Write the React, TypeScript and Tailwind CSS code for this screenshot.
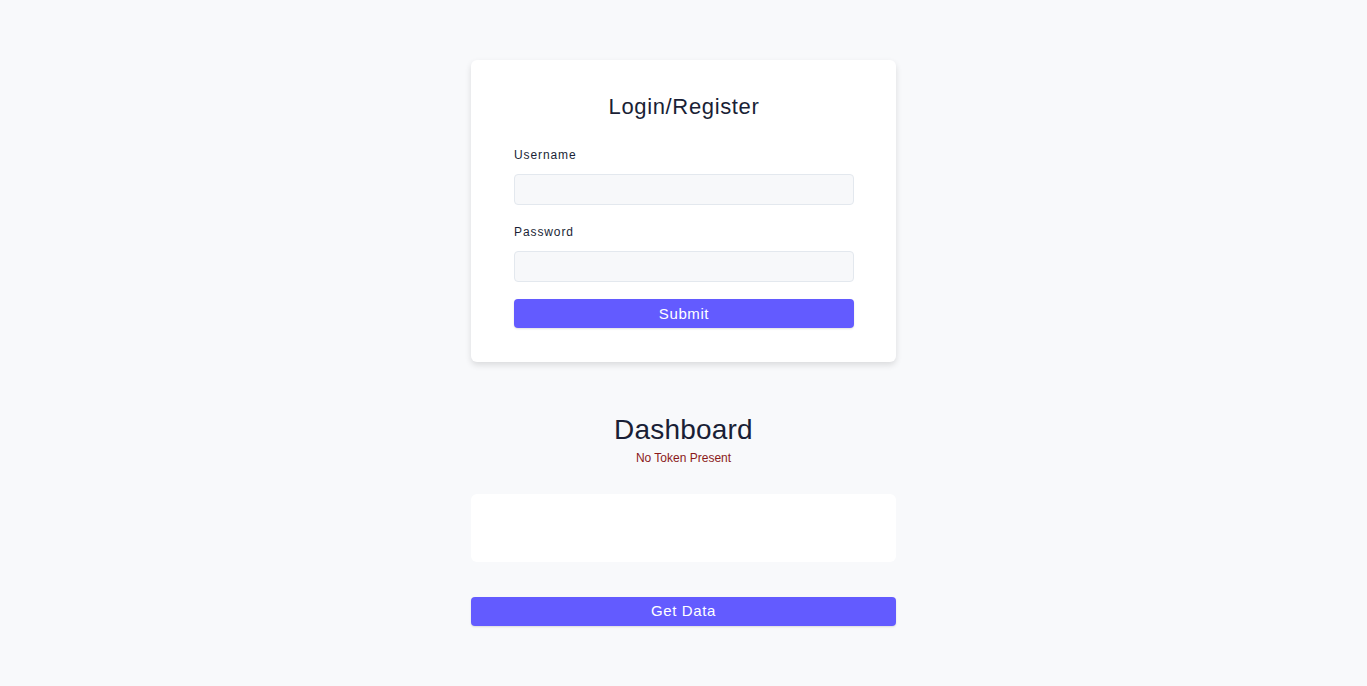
export default function App() {
  return (
    <div className="min-h-screen bg-[#f8f9fb] pt-[60px] pb-[60px] font-['Liberation_Sans',Arial,sans-serif]">
      <div className="mx-auto w-[425px]">
        <form className="rounded-md bg-white pl-[43px] pr-[42px] pt-[34px] pb-[34px] shadow-[0_3px_6px_rgba(0,0,0,0.12)]">
          <h2 className="text-center text-[22px] leading-[26px] tracking-[0.65px] text-[#1a1f36]">Login/Register</h2>
          <label className="mt-[28px] block text-[12px] leading-[14px] tracking-[0.9px] text-[#1a1f36]">Username</label>
          <input className="mt-[12px] block h-[31px] w-full rounded border border-[#e3e8ee] bg-[#f7f8fa] outline-none" />
          <label className="mt-[20px] block text-[12px] leading-[14px] tracking-[0.9px] text-[#1a1f36]">Password</label>
          <input type="password" className="mt-[12px] block h-[31px] w-full rounded border border-[#e3e8ee] bg-[#f7f8fa] outline-none" />
          <button type="button" className="mt-[17px] block h-[29px] w-full rounded bg-[#635bff] pt-[1px] text-[15px] leading-[28px] tracking-[0.6px] text-white shadow-[0_1px_2px_rgba(0,0,0,0.12)]">
            Submit
          </button>
        </form>

        <h1 className="mt-[52px] text-center text-[28px] leading-[32px] tracking-[0.2px] text-[#1a1f36]">Dashboard</h1>
        <p className="mt-[5px] text-center text-[12px] leading-[14px] text-[#8b1a1a]">No Token Present</p>

        <div className="mt-[29px] h-[68px] rounded-md bg-white"></div>

        <button type="button" className="mt-[35px] block h-[29px] w-full rounded bg-[#635bff] text-[15px] tracking-[0.6px] text-white shadow-[0_1px_2px_rgba(0,0,0,0.12)]">
          Get Data
        </button>
      </div>
    </div>
  )
}
